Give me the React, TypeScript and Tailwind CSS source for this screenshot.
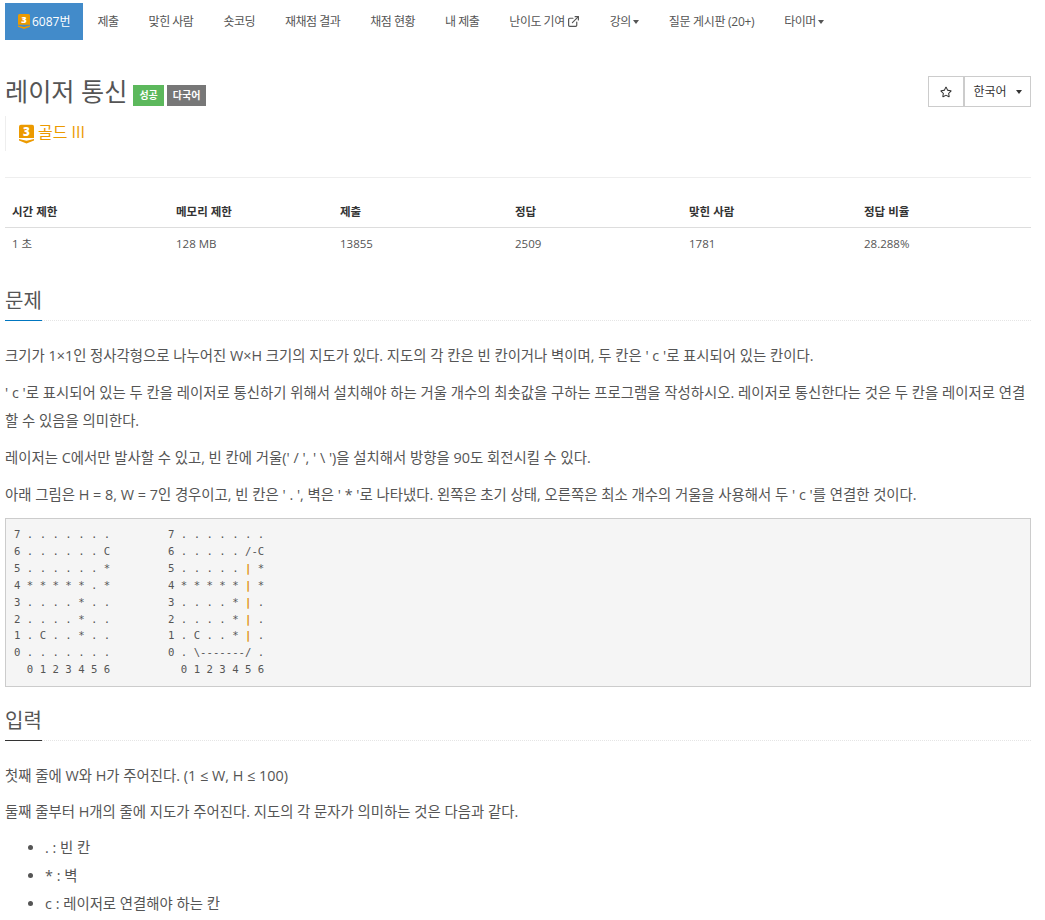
import React from 'react';
import { ExternalLink } from 'lucide-react';
import { FaRegStar } from 'react-icons/fa';

const navItems = ['제출', '맞힌 사람', '숏코딩', '재채점 결과', '채점 현황', '내 제출'];

const stats = [
  { label: '시간 제한', value: '1 초', width: 'w-[164px]' },
  { label: '메모리 제한', value: '128 MB', width: 'w-[164px]' },
  { label: '제출', value: '13855', width: 'w-[175px]' },
  { label: '정답', value: '2509', width: 'w-[174px]' },
  { label: '맞힌 사람', value: '1781', width: 'w-[175px]' },
  { label: '정답 비율', value: '28.288%', width: 'flex-1' },
];

function TierBadge({ className }: { className: string }) {
  return (
    <svg viewBox="0 0 16 20" className={className}>
      <path d="M2 0h12a2 2 0 0 1 2 2v12.2H0V2a2 2 0 0 1 2-2z" fill="#ec9a00" />
      <path d="M0 15.2l8 2 8-2v1.8L8 20 0 17z" fill="#ec9a00" />
      <text x="8" y="12" textAnchor="middle" fontSize="12.5" fontWeight="800" fill="#fff" fontFamily="'Open Sans', sans-serif">3</text>
    </svg>
  );
}

function Caret({ className = '' }: { className?: string }) {
  return <span className={`inline-block w-0 h-0 border-x-[3.5px] border-x-transparent border-t-[4px] border-t-current ${className}`} />;
}

function Heading({ title, color }: { title: string; color: string }) {
  return (
    <div className="border-b border-dotted border-[#e5e5e5] mb-[21px]">
      <h2 className={`inline-block text-[20px] leading-[22px] pb-[8px] -mb-px text-[#555] border-b ${color}`}>{title}</h2>
    </div>
  );
}

const P = ({ children }: { children: React.ReactNode }) => (
  <p className="text-[14.4px] leading-[28px] mb-[9px]">{children}</p>
);

const Bar = () => <span className="text-[#e08a00] font-bold">|</span>;

export default function App() {
  return (
    <div className="pl-[5px] pr-[14px] pt-[3px] text-[#555] font-['Open_Sans','Noto_Sans_CJK_KR',sans-serif] h-[920px] overflow-hidden">
      <nav className="flex text-[12px] leading-[37px] tracking-[-0.5px]">
        <a className="flex items-center gap-[2px] pl-[13px] pr-[12px] bg-[#428bca] text-white tracking-normal">
          <TierBadge className="w-[12px] h-[15px]" />
          6087번
        </a>
        {navItems.map((item) => (
          <a key={item} className="px-[15px]">{item}</a>
        ))}
        <a className="px-[15px] flex items-center gap-[2px]">난이도 기여 <ExternalLink className="w-[13px] h-[13px]" strokeWidth={2.2} /></a>
        <a className="px-[15px] flex items-center gap-[2px]">강의<Caret /></a>
        <a className="px-[15px] tracking-[-0.3px]">질문 게시판 (20+)</a>
        <a className="px-[15px] flex items-center gap-[2px]">타이머<Caret /></a>
      </nav>

      <div className="flex justify-between items-start mt-[36px]">
        <div className="flex items-end gap-[3px]">
          <h1 className="text-[25.2px] leading-[30px] mr-[3px]">레이저 통신</h1>
          <span className="bg-[#5cb85c] text-white text-[10px] font-bold leading-[21px] px-[6px]">성공</span>
          <span className="bg-[#777] text-white text-[10px] font-bold leading-[21px] px-[6px]">다국어</span>
        </div>
        <div className="flex text-[12px] text-[#333] h-[31px]">
          <button className="w-[36px] border border-[#ccc] flex items-center justify-center"><FaRegStar className="w-[12px] h-[12px]" /></button>
          <button className="w-[67px] border border-[#ccc] flex items-center justify-center gap-[9px]">한국어 <Caret /></button>
        </div>
      </div>

      <div className="mt-[9px] border-l border-[#eee] h-[35px] pl-[13px] pb-[3px] flex items-center gap-[4px] text-[#ec9a00] text-[16px]">
        <TierBadge className="w-[15px] h-[20px] mt-[4px]" />
        골드 III
      </div>

      <hr className="mt-[26px] border-[#eee]" />

      <div className="mt-[17px] text-[11.5px]">
        <div className="flex border-b border-[#ddd] font-bold text-[#333] h-[33px] leading-[33px]">
          {stats.map((s) => <div key={s.label} className={`${s.width} pl-[7px]`}>{s.label}</div>)}
        </div>
        <div className="flex h-[33px] leading-[31px]">
          {stats.map((s) => <div key={s.label} className={`${s.width} pl-[7px]`}>{s.value}</div>)}
        </div>
      </div>

      <div className="mt-[29px]">
        <Heading title="문제" color="border-[#0076c0]" />
      </div>

      <P>크기가 1×1인 정사각형으로 나누어진 W×H 크기의 지도가 있다. 지도의 각 칸은 빈 칸이거나 벽이며, 두 칸은 ' c '로 표시되어 있는 칸이다.</P>
      <P>' c '로 표시되어 있는 두 칸을 레이저로 통신하기 위해서 설치해야 하는 거울 개수의 최솟값을 구하는 프로그램을 작성하시오. 레이저로 통신한다는 것은 두 칸을 레이저로 연결할 수 있음을 의미한다.</P>
      <P>레이저는 C에서만 발사할 수 있고, 빈 칸에 거울(' / ', ' \ ')을 설치해서 방향을 90도 회전시킬 수 있다.</P>
      <P>아래 그림은 H = 8, W = 7인 경우이고, 빈 칸은 ' . ', 벽은 ' * '로 나타냈다. 왼쪽은 초기 상태, 오른쪽은 최소 개수의 거울을 사용해서 두 ' c '를 연결한 것이다.</P>

      <pre className="bg-[#f5f5f5] border border-[#ccc] font-['DejaVu_Sans_Mono',monospace] text-[10.67px] leading-[16.9px] px-[8px] pt-[8px] pb-[7px] mb-[23px] text-[#555]">
{`7 . . . . . . .         7 . . . . . . .
6 . . . . . . C         6 . . . . . /-C
5 . . . . . . *         5 . . . . . `}<Bar />{` *
4 * * * * * . *         4 * * * * * `}<Bar />{` *
3 . . . . * . .         3 . . . . * `}<Bar />{` .
2 . . . . * . .         2 . . . . * `}<Bar />{` .
1 . C . . * . .         1 . C . . * `}<Bar />{` .
0 . . . . . . .         0 . \\-------/ .
  0 1 2 3 4 5 6           0 1 2 3 4 5 6`}
      </pre>

      <Heading title="입력" color="border-[#333]" />

      <P>첫째 줄에 W와 H가 주어진다. (1 ≤ W, H ≤ 100)</P>
      <div className="-mt-[1px]">
        <P>둘째 줄부터 H개의 줄에 지도가 주어진다. 지도의 각 문자가 의미하는 것은 다음과 같다.</P>
      </div>
      <ul className="list-disc pl-[40px] text-[14.4px] leading-[28px] -mt-[1px]">
        <li>. : 빈 칸</li>
        <li>* : 벽</li>
        <li>c : 레이저로 연결해야 하는 칸</li>
      </ul>
    </div>
  );
}
